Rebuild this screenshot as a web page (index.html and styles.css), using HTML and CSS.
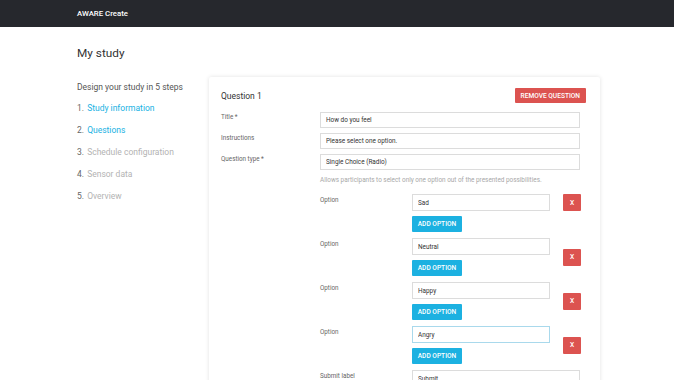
FILE: index.html
```html
<!DOCTYPE html>
<html lang="en">
<head>
    <meta charset="UTF-8">
    <title>AWARE Create</title>
    <link rel="stylesheet" href="styles.css">
</head>
<body>
    <header class="topbar">
        <span class="brand">AWARE Create</span>
    </header>

    <main class="page">
        <h1 class="page-title">My study</h1>

        <div class="layout">
            <!-- Steps -->
            <aside class="steps">
                <p class="steps-title">Design your study in 5 steps</p>
                <ol class="steps-list">
                    <li class="done"><span class="num">1.</span> Study information</li>
                    <li class="done"><span class="num">2.</span> Questions</li>
                    <li><span class="num">3.</span> Schedule configuration</li>
                    <li><span class="num">4.</span> Sensor data</li>
                    <li><span class="num">5.</span> Overview</li>
                </ol>
            </aside>

            <!-- Question card -->
            <section class="card">
                <div class="card-head">
                    <h2>Question 1</h2>
                    <button class="btn btn-red">REMOVE QUESTION</button>
                </div>

                <div class="row">
                    <label>Title *</label>
                    <input class="field" type="text" value="How do you feel">
                </div>
                <div class="row">
                    <label>Instructions</label>
                    <input class="field" type="text" value="Please select one option.">
                </div>
                <div class="row">
                    <label>Question type *</label>
                    <input class="field" type="text" value="Single Choice (Radio)">
                </div>
                <p class="help">Allows participants to select only one option out of the presented possibilities.</p>

                <div class="options">
                    <div class="option first">
                        <label>Option</label>
                        <div class="option-body">
                            <input class="field" type="text" value="Sad">
                            <button class="btn btn-blue">ADD OPTION</button>
                        </div>
                        <button class="btn btn-red btn-x">X</button>
                    </div>
                    <div class="option">
                        <label>Option</label>
                        <div class="option-body">
                            <input class="field" type="text" value="Neutral">
                            <button class="btn btn-blue">ADD OPTION</button>
                        </div>
                        <button class="btn btn-red btn-x">X</button>
                    </div>
                    <div class="option">
                        <label>Option</label>
                        <div class="option-body">
                            <input class="field" type="text" value="Happy">
                            <button class="btn btn-blue">ADD OPTION</button>
                        </div>
                        <button class="btn btn-red btn-x">X</button>
                    </div>
                    <div class="option">
                        <label>Option</label>
                        <div class="option-body">
                            <input class="field focused" type="text" value="Angry">
                            <button class="btn btn-blue">ADD OPTION</button>
                        </div>
                        <button class="btn btn-red btn-x">X</button>
                    </div>
                    <div class="option">
                        <label>Submit label</label>
                        <div class="option-body wide">
                            <input class="field" type="text" value="Submit">
                        </div>
                    </div>
                </div>
            </section>
        </div>
    </main>
</body>
</html>
```

FILE: styles.css
```css
* {
    box-sizing: border-box;
    margin: 0;
    padding: 0;
}

body {
    font-family: Roboto, 'Liberation Sans', sans-serif;
    background: #fff;
    color: #333;
    overflow: hidden;
}

.topbar {
    height: 27px;
    background: #26282d;
    display: flex;
    align-items: center;
    padding-left: 77px;
}

.brand {
    color: #fff;
    font-size: 7.8px;
    font-weight: 500;
}

.page {
    padding-left: 77px;
}

.page-title {
    font-size: 11.8px;
    font-weight: 400;
    color: #333;
    margin-top: 18px;
    height: 16px;
    line-height: 16px;
}

.layout {
    display: flex;
    margin-top: 16px;
}

.steps {
    width: 132px;
    flex-shrink: 0;
    padding-top: 4px;
}

.steps-title {
    font-size: 8.5px;
    color: #555;
    line-height: 12px;
}

.steps-list {
    list-style: none;
    margin-top: 9px;
}

.steps-list li {
    font-size: 8.5px;
    line-height: 12px;
    height: 22px;
    color: #b3b3b3;
}

.steps-list li.done {
    color: #1ab2e3;
}

.steps-list .num {
    color: #666;
    margin-right: 1px;
}

.card {
    width: 391px;
    background: #fff;
    box-shadow: 0 0 4px rgba(0, 0, 0, 0.12);
    border-radius: 2px;
    padding: 11px 14px 20px 12px;
    height: 330px;
}

.card-head {
    display: flex;
    justify-content: space-between;
    align-items: center;
    margin-bottom: 9px;
}

.card-head h2 {
    font-size: 8.5px;
    font-weight: 400;
    color: #333;
}

.btn {
    border: none;
    font-family: Roboto, 'Liberation Sans', sans-serif;
    color: #fff;
    font-size: 6.6px;
    font-weight: 500;
    border-radius: 1px;
}

.btn-red {
    background: #dc5350;
    height: 15px;
    padding: 0 6px;
}

.btn-blue {
    background: #1cb1e1;
    height: 16px;
    width: 50px;
    margin-top: 5px;
}

.btn-x {
    width: 18px;
    height: 17px;
    padding: 0;
    margin-left: 13px;
    align-self: center;
}

.option.first .btn-x {
    align-self: flex-start;
}

.row {
    display: flex;
    margin-bottom: 5px;
}

label {
    width: 99px;
    flex-shrink: 0;
    font-size: 6.3px;
    color: #666;
    line-height: 10px;
}

.field {
    height: 16px;
    border: 1px solid #dcdcdc;
    font-family: Roboto, 'Liberation Sans', sans-serif;
    font-size: 6.4px;
    color: #333;
    padding: 0 5px;
    outline: none;
    background: #fff;
}

.row .field {
    width: 260px;
}

.field.focused {
    border-color: #a9d9ec;
}

.help {
    font-size: 6.4px;
    color: #a8a8a8;
    margin: 5px 0 0 99px;
    line-height: 10px;
}

.options {
    margin-left: 99px;
    margin-top: 9px;
}

.option {
    display: flex;
    margin-bottom: 6px;
}

.option label {
    width: 92px;
    padding-top: 1px;
}

.option-body {
    display: flex;
    flex-direction: column;
    align-items: flex-start;
}

.option-body .field {
    width: 138px;
    height: 17px;
}

.option-body.wide .field {
    width: 168px;
}
```
